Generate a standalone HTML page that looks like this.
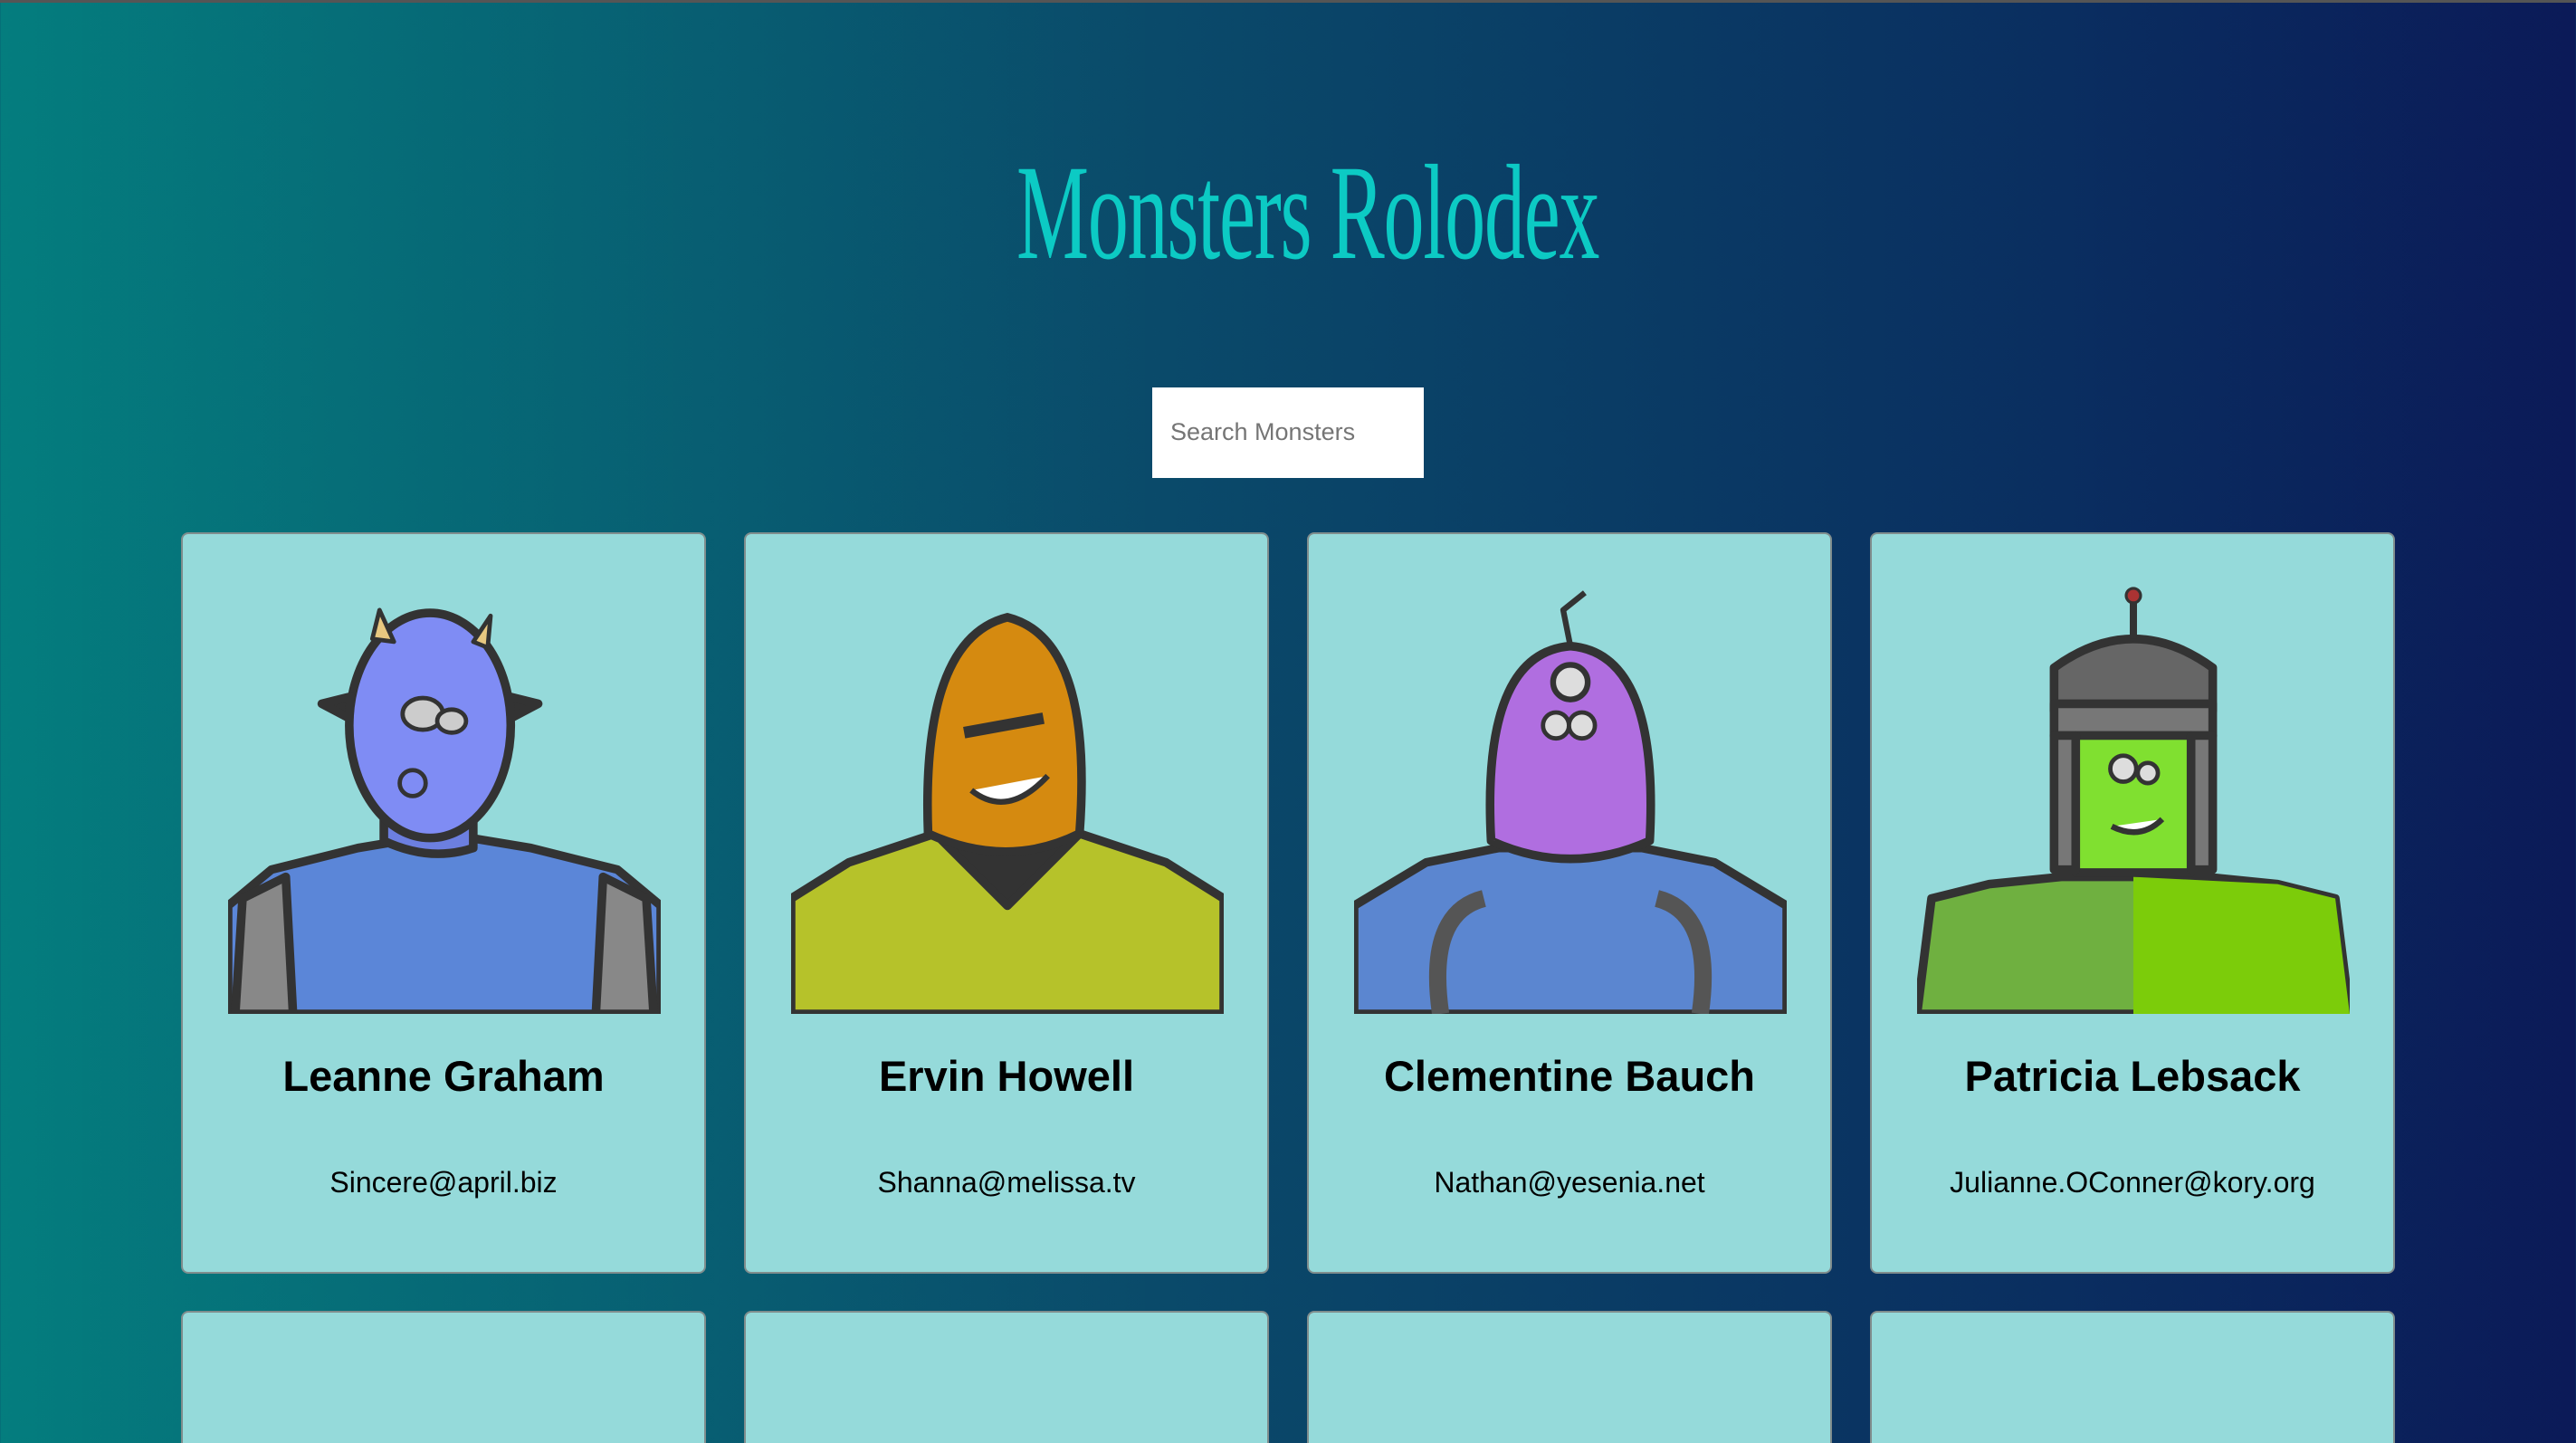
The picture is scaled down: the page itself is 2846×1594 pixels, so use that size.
<!DOCTYPE html>
<html><head><meta charset="utf-8"><style>
*{margin:0;padding:0;box-sizing:border-box}
html,body{width:2846px;height:1594px;overflow:hidden}
body{background:linear-gradient(to right,#047d7e 0%,#0a4a6a 45%,#0a2e60 80%,#0b1a58 100%);font-family:"Liberation Sans",sans-serif;position:relative;box-shadow:inset 0 3px 0 #555}
h1{position:absolute;top:160px;text-align:center;color:#0ccac4;font-family:"Liberation Serif",serif;font-weight:normal;font-size:150px;line-height:150px;transform:scaleX(0.6);transform-origin:center;letter-spacing:-2px;white-space:nowrap;left:923px;width:1000px}
.search{position:absolute;left:1273px;top:428px;width:300px;height:100px;background:#fff;font-size:27px;color:#757575;padding:34px 0 0 20px}
.card{position:absolute;width:580px;height:819px;background:#95dada;border:2px solid #808d8d;border-radius:8px;text-align:center}
.card svg{position:absolute;left:50px;top:52px;width:478px;height:478px}
.card h2{position:absolute;left:0;right:0;top:571px;font-size:47px;font-weight:bold;color:#000}
.card p{position:absolute;left:0;right:0;top:698px;font-size:32px;color:#000}
.r2{height:170px}
</style></head><body>
<h1>Monsters Rolodex</h1>
<div class="search">Search Monsters</div>

<div class="card" style="left:200px;top:588px">
<svg viewBox="0 0 300 300"><g stroke="#333" stroke-width="6" stroke-linejoin="round">
<path d="M0 300 L0 225 L30 200 L90 185 L150 175 L210 185 L270 200 L300 225 L300 300Z" fill="#5b86d8"/>
<path d="M5 300 L10 220 L40 205 L45 300Z" fill="#888"/><path d="M295 300 L290 220 L260 205 L255 300Z" fill="#888"/>
<path d="M108 180 L108 150 L170 150 L170 185 Q140 195 108 180Z" fill="#6c7fe0"/>
<ellipse cx="140" cy="100" rx="56" ry="78" fill="#7f8cf4"/>
<path d="M84 95 L65 85 L85 80Z M196 95 L215 85 L195 80Z" fill="#333"/>
<path d="M100 40 L105 20 L115 42Z M170 42 L182 24 L180 46Z" fill="#e8c880" stroke-width="3"/>
<ellipse cx="135" cy="92" rx="14" ry="11" fill="#ccc" stroke-width="3"/><ellipse cx="155" cy="97" rx="10" ry="8" fill="#ccc" stroke-width="3"/>
<ellipse cx="128" cy="140" rx="9" ry="9" fill="none" stroke-width="3"/></g></svg>
<h2>Leanne Graham</h2><p>Sincere@april.biz</p></div>

<div class="card" style="left:822px;top:588px">
<svg viewBox="0 0 300 300"><g stroke="#333" stroke-width="6" stroke-linejoin="round">
<path d="M0 300 L0 220 L40 195 L100 175 L200 175 L260 195 L300 220 L300 300Z" fill="#b6c22a"/>
<path d="M100 175 L150 225 L200 175Z" fill="#333"/>
<path d="M95 175 Q90 40 150 25 Q210 40 200 175 Q150 200 95 175Z" fill="#d58a10"/>
<path d="M120 105 L175 95" stroke-width="8" fill="none"/>
<path d="M125 145 Q150 165 178 135" fill="#fff" stroke-width="4"/></g></svg>
<h2>Ervin Howell</h2><p>Shanna@melissa.tv</p></div>

<div class="card" style="left:1444px;top:588px">
<svg viewBox="0 0 300 300"><g stroke="#333" stroke-width="6" stroke-linejoin="round">
<path d="M0 300 L0 225 L50 195 L100 185 L200 185 L250 195 L300 225 L300 300Z" fill="#5b86d0"/>
<path d="M95 180 Q88 50 150 45 Q212 50 205 180 Q150 205 95 180Z" fill="#b06ee0"/>
<circle cx="150" cy="70" r="12" fill="#ddd" stroke-width="4"/>
<circle cx="140" cy="100" r="9" fill="#ddd" stroke-width="3"/><circle cx="158" cy="100" r="9" fill="#ddd" stroke-width="3"/>
<path d="M150 45 L145 20 L160 8" fill="none" stroke-width="4"/>
<path d="M60 300 Q50 230 90 220 M240 300 Q250 230 210 220" fill="none" stroke="#555" stroke-width="12"/></g></svg>
<h2>Clementine Bauch</h2><p>Nathan@yesenia.net</p></div>

<div class="card" style="left:2066px;top:588px">
<svg viewBox="0 0 300 300"><g stroke="#333" stroke-width="6" stroke-linejoin="round">
<path d="M0 300 L10 220 L50 210 L100 205 L200 205 L250 210 L290 220 L300 300Z" fill="#6fb040"/>
<path d="M150 205 L250 210 L290 220 L300 300 L150 300Z" fill="#7ccc0a" stroke="none"/>
<path d="M95 60 Q150 20 205 60 L205 90 L95 90Z" fill="#666"/>
<rect x="95" y="85" width="110" height="22" fill="#777"/>
<rect x="110" y="107" width="80" height="95" fill="#80e030"/>
<path d="M95 107 L110 107 L110 200 L95 200Z M190 107 L205 107 L205 200 L190 200Z" fill="#777"/>
<circle cx="143" cy="130" r="9" fill="#ddd" stroke-width="3"/><circle cx="160" cy="133" r="7" fill="#ddd" stroke-width="3"/>
<path d="M135 170 Q155 180 170 165" fill="#fff" stroke-width="4"/>
<path d="M150 40 L150 10" stroke-width="5"/><circle cx="150" cy="10" r="5" fill="#a33" stroke-width="2"/></g></svg>
<h2>Patricia Lebsack</h2><p>Julianne.OConner@kory.org</p></div>

<div class="card r2" style="left:200px;top:1448px"></div>
<div class="card r2" style="left:822px;top:1448px"></div>
<div class="card r2" style="left:1444px;top:1448px"></div>
<div class="card r2" style="left:2066px;top:1448px"></div>
</body></html>
